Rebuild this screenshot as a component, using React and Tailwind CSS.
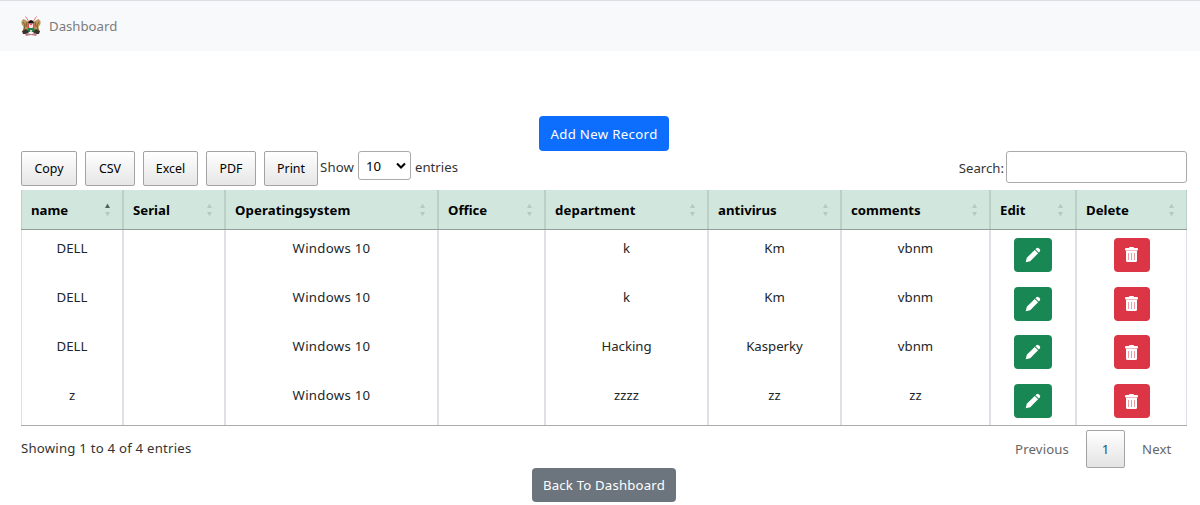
const columns = [
  { key: "name", sorted: true },
  { key: "Serial" },
  { key: "Operatingsystem", spacing: "tracking-[0.1px]" },
  { key: "Office" },
  { key: "department", spacing: "tracking-[0.15px]" },
  { key: "antivirus" },
  { key: "comments" },
  { key: "Edit" },
  { key: "Delete" },
];

const rows = [
  ["DELL", "", "Windows 10", "", "k", "Km", "vbnm"],
  ["DELL", "", "Windows 10", "", "k", "Km", "vbnm"],
  ["DELL", "", "Windows 10", "", "Hacking", "Kasperky", "vbnm"],
  ["z", "", "Windows 10", "", "zzzz", "zz", "zz"],
];

const grid =
  "grid grid-cols-[102px_102px_213px_107px_163px_133px_149px_86px_111px]";

function Emblem() {
  return (
    <svg className="h-5 w-5" viewBox="0 0 20 20" aria-hidden="true">
      <path d="M4.500 0.500l4 6M15.500 0.500l-4 6" stroke="#f0707a" strokeWidth="1" />
      <path d="M0.500 5l2-2 2 1 3 2v7l-3 3-3 0 1-5-2-3z" fill="#b9975c" />
      <path d="M19.500 5l-2-2-2 1-3 2v7l3 3 3 0-1-5 2-3z" fill="#b9975c" />
      <path d="M2 6l2 3-1 5M6 6l-1 5M18 6l-2 3 1 5M14 6l1 5" stroke="#6d5028" strokeWidth="0.800" fill="none" />
      <path d="M7 6.500q1-2.500 3-2.500t3 2.500v1H7z" fill="#151515" />
      <path d="M6.500 7.500h7v4.500h-7z" fill="#e34a55" />
      <path d="M8 7.500l2 2 2-2v4l-2 1-2-1z" fill="#f6e8e4" />
      <path d="M7 12h6l2 4H5z" fill="#26824a" />
      <path d="M1 15l4-2 3 3-2 2H2zM19 15l-4-2-3 3 2 2h4z" fill="#393029" />
      <path d="M4 18l2-1 4 1 4-1 2 1-1 2-5-1-5 1z" fill="#b98086" />
      <path d="M9 14h2v2H9z" fill="#c6d8c2" />
    </svg>
  );
}

function PencilIcon() {
  return (
    <svg className="h-4 w-4" viewBox="0 0 16 16" fill="white" aria-hidden="true">
      <path d="M0.700 15.300l1.100-4.600L9.700 2.900l3.400 3.400-7.900 7.900z" />
      <path d="M10.400 2.200l1-1q1.300-1 2.600.2l.6.6q1.200 1.300.2 2.600l-1 1z" />
    </svg>
  );
}

function TrashIcon() {
  return (
    <svg className="h-[15px] w-[13px]" viewBox="0 0 13 15" aria-hidden="true">
      <path d="M4.500 0h4l.6 1H12q1 0 1 1v1H0V2q0-1 1-1h2.900z" fill="white" />
      <path d="M0.500 3h12v1h-12z" fill="#f3b8be" />
      <path d="M1 4h11v9.500q0 1.500-1.500 1.500h-8Q1 15 1 13.500z" fill="white" />
      <path d="M3.500 6v7M6.500 6v7M9.500 6v7" stroke="#ec8e98" strokeWidth="0.900" />
    </svg>
  );
}

function SortArrows({ sorted }) {
  return (
    <svg className="h-3.5 w-[5px]" viewBox="0 0 5 14" aria-hidden="true">
      <path d="M0 5L2.500 0.500L5 5z" fill={sorted ? "#53605a" : "#b6cac0"} />
      <path d="M0 9L2.500 13.500L5 9z" fill="#b6cac0" />
    </svg>
  );
}

function ExportButton({ label, className }) {
  return (
    <button
      className={`h-[35px] rounded-[2px] border border-[#a3a3a3] bg-linear-to-b from-white to-[#e6e6e6] text-[12.4px] text-black ${className}`}
    >
      {label}
    </button>
  );
}

export default function App() {
  return (
    <div className="h-[505px] overflow-hidden bg-white font-['Noto_Sans',sans-serif] text-[13.2px] leading-[22px] text-[#333]">
      <nav className="flex h-[51px] items-center gap-2 border-t border-[#dcdee1] bg-[#f8f9fb] pl-[21px] text-[#7b7c7d]">
        <Emblem />
        <span>Dashboard</span>
      </nav>

      <main className="pr-[13px] pl-[21px]">
        <div className="flex h-[100px] items-end justify-center">
          <button className="h-[35px] w-[130px] rounded bg-[#0d6efd] tracking-[0.35px] text-white">
            Add New Record
          </button>
        </div>

        <div className="flex h-[39px] items-start">
          <div className="flex gap-2">
            <ExportButton label="Copy" className="w-14" />
            <ExportButton label="CSV" className="w-[50px]" />
            <ExportButton label="Excel" className="w-[55px]" />
            <ExportButton label="PDF" className="w-[50px]" />
            <ExportButton label="Print" className="w-[54px]" />
          </div>
          <label className="ml-0.5 flex items-center">
            <span className="w-[38px] pt-[3px] tracking-[0.15px] whitespace-nowrap">Show</span>
            <span className="flex h-[29px] w-[53px] items-center justify-between rounded-[3px] border border-[#aaa] pr-1 pl-[7px] text-black">
              10
              <svg className="h-2 w-2.5" viewBox="0 0 10 8" fill="none" aria-hidden="true">
                <path d="M1 1.500l4 4 4-4" stroke="black" strokeWidth="2" />
              </svg>
            </span>
            <span className="ml-1 pt-[3px]">entries</span>
          </label>
          <label className="ml-auto flex items-center">
            <span className="mr-0.5 pt-px">Search:</span>
            <input className="h-8 w-[181px] rounded-[3px] border border-[#aaa] px-1 outline-none" />
          </label>
        </div>

        <div className={`${grid} h-10 border-b border-[#8f9f97] bg-[#d1e7dd] font-bold text-black`}>
          {columns.map(({ key, sorted, spacing = "" }) => (
            <div
              key={key}
              className="flex items-center justify-between border-x border-[#bcd0c7] pr-3 pl-[9px]"
            >
              <span className={spacing}>{key}</span>
              <SortArrows sorted={sorted} />
            </div>
          ))}
        </div>

        <div className="h-[196px] border-b border-[#aaadb0] text-[#212529]">
          {rows.map((row, i) => (
            <div key={i} className={`${grid} h-[48.750px]`}>
              {row.map((value, j) => (
                <div
                  key={j}
                  className={`border-x border-[#dee2e6] pt-[7.400px] text-center ${j === 2 ? "tracking-[0.3px]" : ""}`}
                >
                  {value}
                </div>
              ))}
              <div className="flex items-start justify-center border-x border-[#dee2e6] pt-[7.750px]">
                <button className="flex h-[34.200px] w-[38px] items-center justify-center rounded bg-[#198754]">
                  <PencilIcon />
                </button>
              </div>
              <div className="flex items-start justify-center border-x border-[#dee2e6] pt-[7.750px]">
                <button className="flex h-[34.200px] w-9 items-center justify-center rounded bg-[#dc3545]">
                  <TrashIcon />
                </button>
              </div>
            </div>
          ))}
        </div>

        <div className="flex h-[42px] justify-between">
          <span className="pt-[11px] tracking-[0.22px]">Showing 1 to 4 of 4 entries</span>
          <div className="flex items-center pt-[3px] text-[#666]">
            <span className="w-[71px] tracking-[0.15px]">Previous</span>
            <button className="h-[38px] w-[39px] rounded-[2px] border border-[#a3a3a3] bg-linear-to-b from-white to-[#e3e3e3] text-[#1b4f7d]">
              1
            </button>
            <span className="w-[62px] pl-[17px] tracking-[0.15px]">Next</span>
          </div>
        </div>

        <div className="flex justify-center">
          <button className="h-[34px] w-36 rounded bg-[#6c757d] tracking-[0.18px] text-white">
            Back To Dashboard
          </button>
        </div>
      </main>
    </div>
  );
}
